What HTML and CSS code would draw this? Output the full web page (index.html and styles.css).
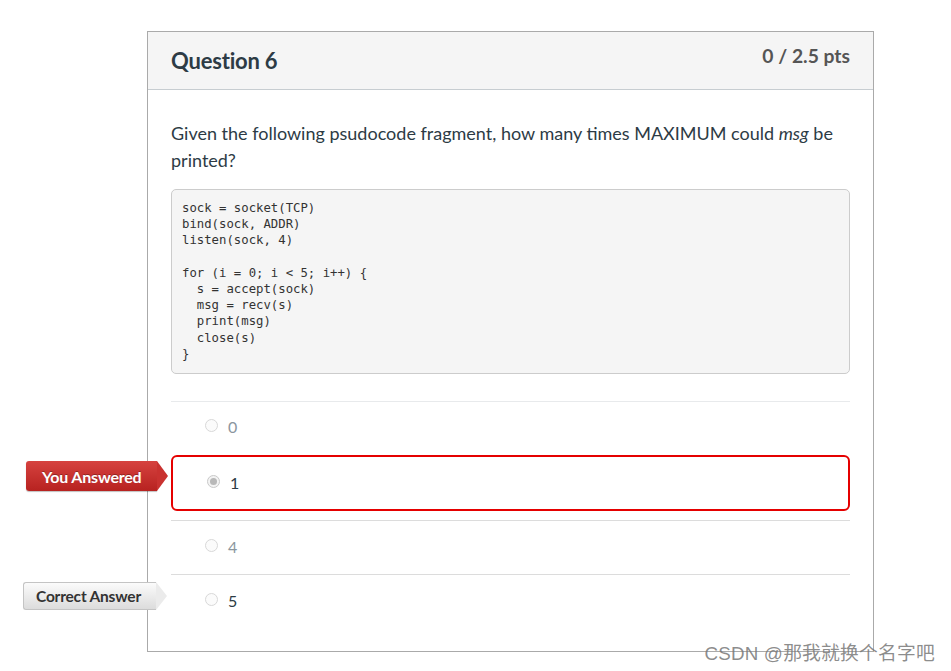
FILE: index.html
```html
<!DOCTYPE html>
<html>
<head>
<meta charset="utf-8">
<link rel="stylesheet" href="styles.css">
</head>
<body>
<div class="page">
  <div class="card">
    <div class="card-header">
      <h2 class="title">Question 6</h2>
      <div class="pts">0 / 2.5 pts</div>
    </div>
    <div class="card-body">
      <p class="question">Given the following psudocode fragment, how many times MAXIMUM could <em>msg</em> be printed?</p>
      <pre class="code">sock = socket(TCP)
bind(sock, ADDR)
listen(sock, 4)

for (i = 0; i &lt; 5; i++) {
  s = accept(sock)
  msg = recv(s)
  print(msg)
  close(s)
}</pre>
      <div class="answers">
        <div class="answer first">
          <span class="radio"></span><span class="label muted">0</span>
        </div>
        <div class="answer selected">
          <span class="flag flag-red">You Answered</span>
          <span class="radio checked"></span><span class="label">1</span>
        </div>
        <div class="answer bordered">
          <span class="radio"></span><span class="label muted">4</span>
        </div>
        <div class="answer bordered">
          <span class="flag flag-gray">Correct Answer</span>
          <span class="radio"></span><span class="label">5</span>
        </div>
      </div>
    </div>
  </div>
  <div class="watermark">CSDN @那我就换个名字吧</div>
</div>
</body>
</html>
```
FILE: styles.css
```css
* { box-sizing: border-box; }
html, body {
  margin: 0;
  padding: 0;
  background: #fff;
  font-family: Lato, "Noto Sans", sans-serif;
  color: #2d3b45;
}
.page {
  position: relative;
  width: 951px;
  height: 671px;
  padding: 31px 0 0 147px;
}
.card {
  position: relative;
  width: 727px;
  height: 621px;
  border: 1px solid #aaa;
}
.card-header {
  height: 58px;
  background: #f5f5f5;
  border-bottom: 1px solid #c7cdd1;
  display: flex;
  justify-content: space-between;
  align-items: flex-start;
  padding: 0 23px;
}
.title {
  margin: 0;
  font-size: 22px;
  font-weight: 700;
  line-height: 24px;
  padding-top: 17px;
  color: #2d3b45;
  letter-spacing: -0.2px;
}
.pts {
  font-size: 19.3px;
  font-weight: 700;
  color: #555;
  padding-top: 12px;
  line-height: 24px;
}
.card-body {
  padding: 30px 23px 0 23px;
}
.question {
  margin: 0;
  font-size: 18px;
  line-height: 27px;
  color: #2d3b45;
}
.code {
  margin: 15px 0 0 0;
  background: #f5f5f5;
  border: 1px solid #ccc;
  border-radius: 5px;
  padding: 10px 10px 12px 10px;
  font-family: "DejaVu Sans Mono", monospace;
  font-size: 12.3px;
  line-height: 16.2px;
  color: #333;
  height: 185px;
}
.answers {
  margin-top: 27px;
  border-top: 1px solid #e8eaec;
}
.answer {
  position: relative;
  height: 54px;
  display: flex;
  align-items: center;
  padding-left: 34px;
  padding-bottom: 2px;
}
.answer.first {
  padding-bottom: 6px;
}
.answer.selected {
  height: 56px;
  margin: -1px 0 9px 0;
  border: 2px solid #e50000;
  border-radius: 6px;
  padding-left: 34px;
  padding-bottom: 2px;
}
.answer.bordered {
  border-top: 1px solid #dcdcdc;
}
.radio {
  width: 13px;
  height: 13px;
  border-radius: 50%;
  border: 1px solid #d8d8d8;
  background: #fbfbfb;
  margin-right: 10px;
  margin-top: -2px;
  position: relative;
}
.radio.checked {
  background: #f3f3f3;
  border-color: #c9c9c9;
}
.radio.checked::after {
  content: "";
  position: absolute;
  left: 2px;
  top: 2px;
  width: 7px;
  height: 7px;
  border-radius: 50%;
  background: #b8b8b8;
}
.label {
  font-size: 16px;
  color: #2d3b45;
}
.label.muted {
  color: #8b969e;
}
.flag {
  position: absolute;
  top: 50%;
  font-weight: 700;
  white-space: nowrap;
  display: flex;
  align-items: center;
}
.flag::after {
  content: "";
  position: absolute;
  width: 0;
  height: 0;
}
.flag-red {
  left: -147px;
  width: 131px;
  height: 30px;
  margin-top: -22px;
  font-size: 16px;
  color: #fff;
  background: linear-gradient(#d6423f, #b72220);
  border-radius: 3px 0 0 3px;
  box-shadow: 0 1px 1px rgba(0,0,0,0.25);
  padding-left: 16px;
  letter-spacing: -0.2px;
  text-shadow: 0 -1px 0 rgba(0,0,0,0.3);
}
.flag-red::after {
  top: 0;
  right: -11px;
  border-top: 15px solid transparent;
  border-bottom: 15px solid transparent;
  border-left: 11px solid #c93230;
}
.flag-gray {
  left: -148px;
  width: 133px;
  height: 28px;
  margin-top: -20px;
  font-size: 15.5px;
  color: #333;
  background: linear-gradient(#fbfbfb, #dcdcdc);
  border: 1px solid #c4c4c4;
  border-right: none;
  border-radius: 3px 0 0 3px;
  padding-left: 12px;
  letter-spacing: -0.2px;
}
.flag-gray::after {
  top: -1px;
  right: -11px;
  border-top: 14px solid transparent;
  border-bottom: 14px solid transparent;
  border-left: 11px solid #ebebeb;
}
.watermark {
  position: absolute;
  right: 16px;
  top: 638px;
  font-family: "Liberation Sans", "Noto Sans CJK SC", sans-serif;
  font-size: 18.8px;
  color: rgba(120,120,120,0.85);
  letter-spacing: 0.2px;
}
```
